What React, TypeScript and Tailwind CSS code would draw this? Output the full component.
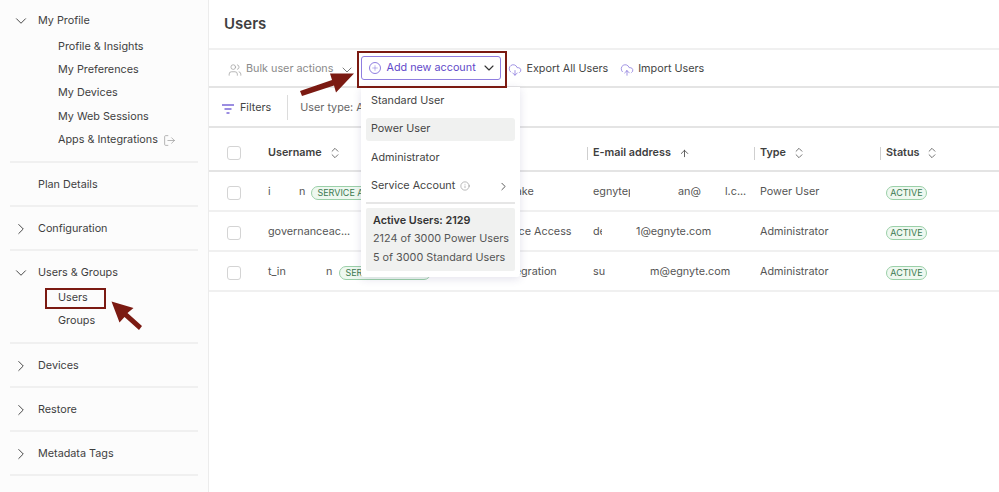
import React from "react";
import { ChevronDown, ChevronRight, ChevronsUpDown, ArrowUp, Plus, Users as UsersIcon, CloudDownload, CloudUpload, LogOut, Info } from "lucide-react";

function Section({ label, open, children, plain }: { label: string; open?: boolean; plain?: boolean; children?: React.ReactNode }) {
  return (
    <div className="border-b-2 border-[#f0f0f0] mx-[10px] pt-[11px] pb-[9px] w-[188px]">
      <div className="flex items-center h-[22px]">
        <span className="w-[28px] pl-[2px] flex text-[#444]">
          {plain ? null : open ? <ChevronDown size={18} strokeWidth={1.3} /> : <ChevronRight size={18} strokeWidth={1.3} />}
        </span>
        <span className="text-[10.8px] text-[#3f3f3f]">{label}</span>
      </div>
      {children}
    </div>
  );
}

function Sub({ children }: { children: React.ReactNode }) {
  return <div className="pl-[48px] h-[23.4px] flex items-center text-[10.8px] text-[#3f3f3f]">{children}</div>;
}

function Sort() {
  return <ChevronsUpDown size={14} strokeWidth={1.4} className="text-[#555]" />;
}

function Check() {
  return <span className="w-[14px] h-[14px] rounded-[3px] border border-[#d4d4d4] bg-white block shrink-0" />;
}

function Active() {
  return (
    <span className="inline-flex items-center h-[14px] w-[41px] justify-center rounded-full border border-[#9bd0a8] bg-[#eef8f0] text-[9px] text-[#3c7a50]">ACTIVE</span>
  );
}

function Svc() {
  return (
    <span className="inline-flex items-center h-[14px] px-[5px] w-[92px] rounded-full border border-[#9bd0a8] bg-[#eef8f0] text-[9px] text-[#3c7a50] whitespace-nowrap overflow-hidden">SERVICE ACCOUNT</span>
  );
}

function Row({ name, access, offset, email, type }: { name: React.ReactNode; access: string; offset: string; email: React.ReactNode; type: string }) {
  return (
    <div className="flex items-center h-[40px] pt-[3px] border-b-2 border-[#f0f0f0] text-[10.8px] text-[#555]">
      <span className="w-[59px] pl-[18px]"><Check /></span>
      <div className="w-[222px] flex items-center whitespace-nowrap">{name}</div>
      <div className="w-[103px] whitespace-nowrap"><span className={offset}>{access}</span></div>
      <div className="w-[167px] flex whitespace-nowrap">{email}</div>
      <div className="w-[126px]">{type}</div>
      <Active />
    </div>
  );
}

function HeadCell({ w, label, icon, sep = true }: { w: string; label: string; icon: React.ReactNode; sep?: boolean }) {
  return (
    <div className={`${w} flex items-center h-[14px]`}>
      {sep ? <span className="w-px h-[13px] bg-[#cfcfcf] mr-[5px]" /> : null}
      <span className="text-[10.8px] font-semibold text-[#3f3f3f]">{label}</span>
      {icon}
    </div>
  );
}

export default function App() {
  return (
    <div className="relative flex w-[999px] h-[492px] overflow-hidden bg-white font-['Inter',sans-serif]">
      <aside className="w-[209px] shrink-0 h-[493px] border-r border-[#ececec] bg-[#fcfcfc] -mt-[1px]">
        <div className="border-b-2 border-[#f0f0f0] mx-[10px] pt-[11px] pb-[9px] w-[188px]">
          <div className="flex items-center h-[22px]">
            <span className="w-[28px] pl-[2px] flex text-[#444]"><ChevronDown size={18} strokeWidth={1.3} /></span>
            <span className="text-[10.8px] text-[#3f3f3f]">My Profile</span>
          </div>
          <div className="mt-[3px]">
            <Sub>Profile &amp; Insights</Sub>
            <Sub>My Preferences</Sub>
            <Sub>My Devices</Sub>
            <Sub>My Web Sessions</Sub>
            <Sub>Apps &amp; Integrations<LogOut size={13} strokeWidth={1.3} className="ml-[5px] text-[#999]" /></Sub>
          </div>
        </div>
        <Section label="Plan Details" plain />
        <Section label="Configuration" />
        <Section label="Users & Groups" open>
          <div className="mt-[2px]">
            <Sub>Users</Sub>
            <Sub>Groups</Sub>
          </div>
        </Section>
        <Section label="Devices" />
        <Section label="Restore" />
        <Section label="Metadata Tags" />
      </aside>

      <main className="flex-1 min-w-0">
        <div className="h-[50px] pt-[1px] border-b-2 border-[#f0f0f0] pl-[15px] flex items-center">
          <h1 className="text-[15px] font-semibold text-[#3f3f3f]">Users</h1>
        </div>
        <div className="h-[38px] pt-[3px] border-b-2 border-[#e4e4e4] flex items-center pl-[19px] whitespace-nowrap">
          <UsersIcon size={14} strokeWidth={1.2} className="text-[#999]" />
          <span className="ml-[4px] text-[10.8px] text-[#8a8a8a]">Bulk user actions</span>
          <ChevronDown size={16} strokeWidth={1.3} className="ml-[6px] text-[#666]" />
          <div className="ml-[6px] w-[140px] h-[24px] -mt-[3px] rounded-[3px] border border-[#8f7ee0] flex items-center pl-[7px]">
            <span className="w-[12px] h-[12px] shrink-0 rounded-full border border-[#8f7ee0] flex items-center justify-center"><Plus size={8} strokeWidth={1.5} className="text-[#7b68d8]" /></span>
            <span className="ml-[5px] text-[10.8px] text-[#5f49c9]">Add new account</span>
            <ChevronDown size={16} strokeWidth={1.7} className="ml-[5px] shrink-0 text-[#333]" />
          </div>
          <CloudDownload size={14} strokeWidth={1.2} className="ml-[7px] text-[#7b68d8]" />
          <span className="ml-[4px] text-[10.8px] text-[#444]">Export All Users</span>
          <CloudUpload size={14} strokeWidth={1.2} className="ml-[12px] text-[#7b68d8]" />
          <span className="ml-[4px] text-[10.8px] text-[#444]">Import Users</span>
        </div>
        <div className="h-[40px] pt-[3px] border-b-2 border-[#e4e4e4] flex items-center pl-[13px]">
          <svg width="12" height="10" viewBox="0 0 12 10" className="shrink-0"><path d="M0 1h12M2.5 5h7M4.5 9h3" stroke="#7b68d8" strokeWidth="1.4" /></svg>
          <span className="ml-[6px] text-[10.8px] text-[#444]">Filters</span>
          <span className="ml-[16px] w-px h-[25px] -mt-[3px] bg-[#dcdcdc]" />
          <span className="ml-[12px] text-[10.8px] text-[#666]">User type: All</span>
        </div>
        <div className="h-[44px] pt-[8px] border-b-2 border-[#e4e4e4] flex items-center">
          <span className="w-[59px] pl-[18px]"><Check /></span>
          <HeadCell w="w-[319px]" label="Username" sep={false} icon={<span className="ml-[6px]"><Sort /></span>} />
          <HeadCell w="w-[167px]" label="E-mail address" icon={<ArrowUp size={11} strokeWidth={1.8} className="ml-[8px] text-[#444]" />} />
          <HeadCell w="w-[126px]" label="Type" icon={<span className="ml-[6px]"><Sort /></span>} />
          <HeadCell w="w-[110px]" label="Status" icon={<span className="ml-[6px]"><Sort /></span>} />
        </div>
        <Row
          name={<><span className="w-[31px]">i</span><span>n</span><span className="ml-[6px] flex"><Svc /></span></>}
          access="Data Lake"
          offset="-ml-[7px]"
          email={<><span className="w-[37px] overflow-hidden">egnytep</span><span className="ml-[48px] w-[47px]">an@</span><span>l.c...</span></>}
          type="Power User"
        />
        <Row
          name={<><span>governanceac...</span><span className="ml-[11px] flex"><Svc /></span></>}
          access="Device Access"
          offset="ml-[6px]"
          email={<><span className="w-[9px] overflow-hidden">de</span><span className="ml-[34px]">1@egnyte.com</span></>}
          type="Administrator"
        />
        <Row
          name={<><span className="w-[58px]">t_in</span><span>n</span><span className="ml-[7px] flex"><Svc /></span></>}
          access="Integration"
          offset="ml-[12px]"
          email={<><span className="w-[57px]">su</span><span>m@egnyte.com</span></>}
          type="Administrator"
        />
      </main>

      {/* dropdown */}
      <div className="absolute left-[361px] top-[87px] w-[159px] h-[190px] bg-white shadow-[0_2px_8px_rgba(60,50,120,0.14)] rounded-b-[3px] px-[5px] pt-[2.5px] text-[10.8px] text-[#444]">
        <div className="h-[23px] pl-[5px] flex items-center">Standard User</div>
        <div className="h-[23px] pl-[5px] mt-[5.4px] flex items-center bg-[#f0f1f0] rounded-[3px]">Power User</div>
        <div className="h-[23px] pl-[5px] mt-[5.4px] flex items-center">Administrator</div>
        <div className="h-[23px] pl-[5px] mt-[5.4px] flex items-center">
          Service Account
          <Info size={10} strokeWidth={1.2} className="ml-[5px] text-[#777]" />
          <ChevronRight size={13} strokeWidth={1.6} className="ml-auto mr-[5px] text-[#444]" />
        </div>
        <div className="mt-[4px] border-t-2 border-[#e6e6e6]" />
        <div className="mt-[4px] h-[63px] bg-[#f0f1f0] rounded-[2px] px-[7px] py-[4px] leading-[18.5px] text-[#555] whitespace-nowrap">
          <div className="font-semibold text-[#333]">Active Users: 2129</div>
          <div>2124 of 3000 Power Users</div>
          <div>5 of 3000 Standard Users</div>
        </div>
      </div>

      {/* annotations */}
      <div className="absolute left-[357px] top-[51px] w-[150px] h-[37px] border-2 border-[#7b1a12]" />
      <div className="absolute left-[45px] top-[288px] w-[61px] h-[21px] border-2 border-[#7b1a12]" />
      <svg className="absolute left-0 top-0 pointer-events-none" width="999" height="492" viewBox="0 0 999 492">
        <path d="M300 91 L332 80 L330 73.500 L354 73.500 L336 92.500 L334 85.500 L302 96 Z" fill="#7b1a12" />
        <path d="M111.500 301.500 L133.500 308 L127.500 313 L142 326 L139 330 L124.500 317 L119.500 322.500 Z" fill="#7b1a12" />
      </svg>
    </div>
  );
}
